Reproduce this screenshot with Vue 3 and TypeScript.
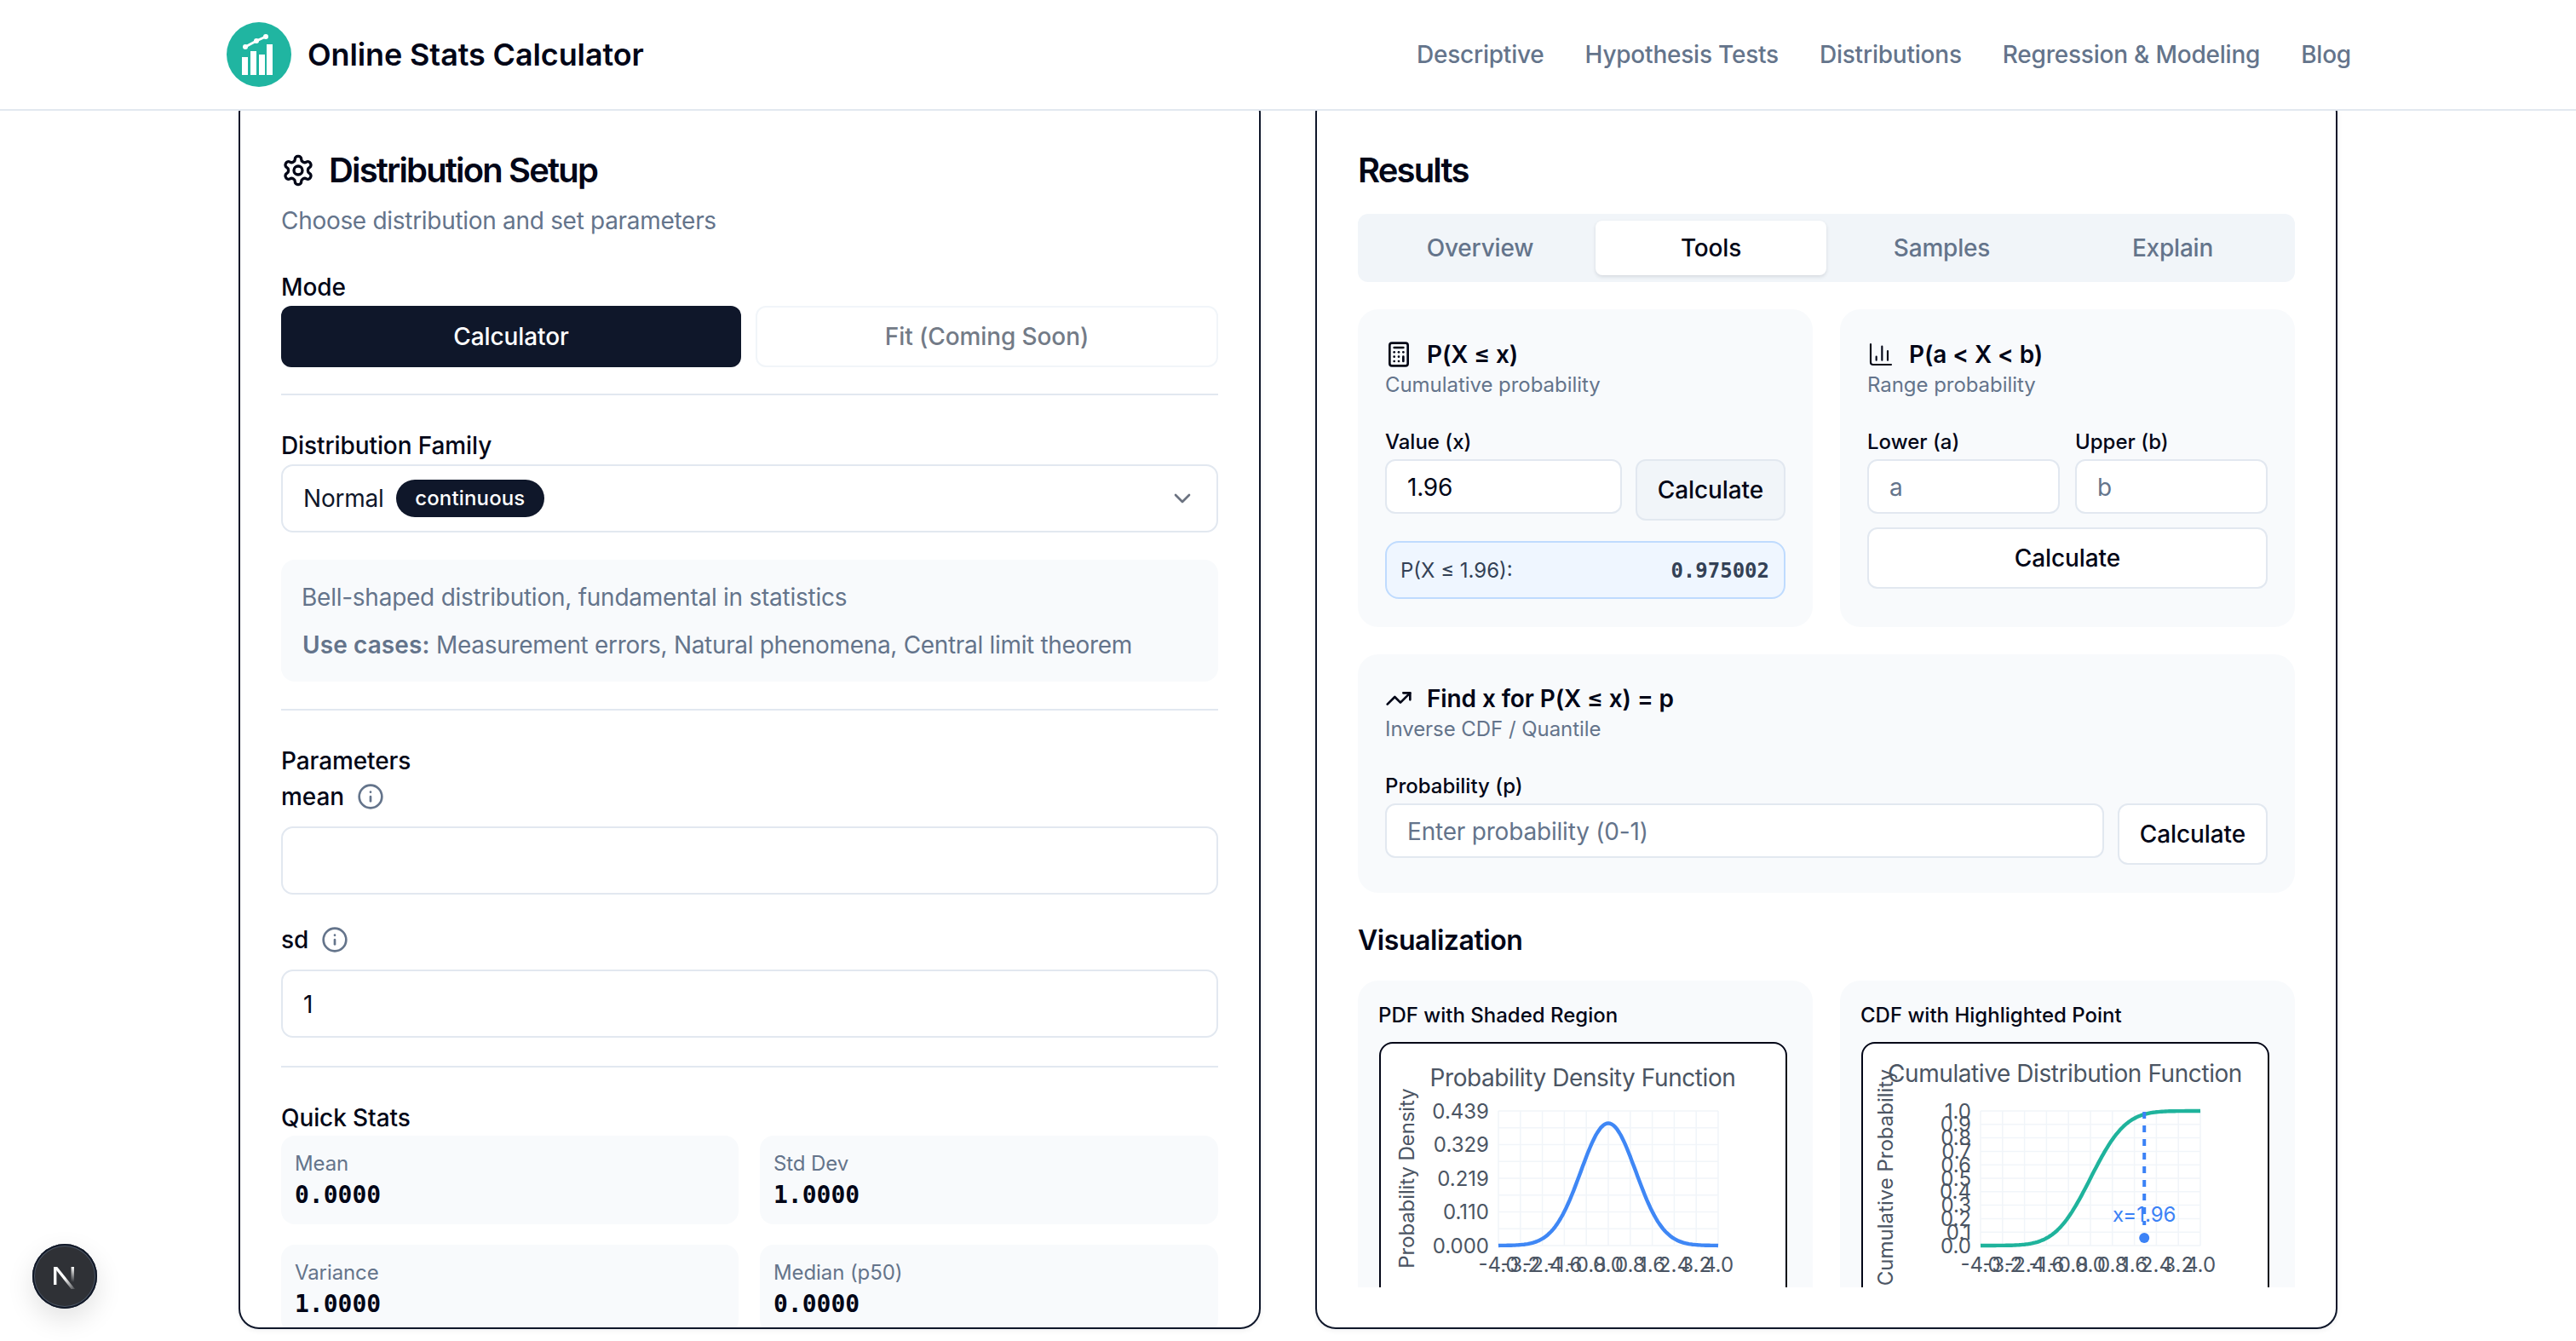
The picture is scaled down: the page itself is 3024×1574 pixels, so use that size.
<script setup lang="ts">
const navItems: string[] = ['Descriptive', 'Hypothesis Tests', 'Distributions', 'Regression & Modeling', 'Blog']
const tabs: string[] = ['Overview', 'Tools', 'Samples', 'Explain']
const stats = [
  { label: 'Mean', value: '0.0000' },
  { label: 'Std Dev', value: '1.0000' },
  { label: 'Variance', value: '1.0000' },
  { label: 'Median (p50)', value: '0.0000' },
]

const L = 138, R = 396, T = 79, B = 237
const xTicks: string[] = ['-4.0', '-3.2', '-2.4', '-1.6', '-0.8', '0.0', '0.8', '1.6', '2.4', '3.2', '4.0']
const xAt = (v: number) => L + ((v + 4) / 8) * (R - L)
const vLines: number[] = xTicks.map((t) => xAt(Number(t)))
const pdfTicks: string[] = ['0.439', '0.329', '0.219', '0.110', '0.000']
const pdfGrid: number[] = Array.from({ length: 9 }, (_, i) => T + (i * (B - T)) / 8)
const cdfTicks: string[] = ['1.0', '0.9', '0.8', '0.7', '0.6', '0.5', '0.4', '0.3', '0.2', '0.1', '0.0']
const cdfGrid: number[] = cdfTicks.map((_, i) => T + (i * (B - T)) / 10)

const pdf = (x: number) => Math.exp(-0.5 * x * x) / Math.sqrt(2 * Math.PI)
const cdf = (x: number) => {
  let s = 0
  const n = 200
  for (let i = 0; i < n; i++) {
    const u = -6 + ((x + 6) * (i + 0.5)) / n
    s += (pdf(u) * (x + 6)) / n
  }
  return s
}
const build = (f: (x: number) => number, top: number): string => {
  const pts: string[] = []
  for (let i = 0; i <= 120; i++) {
    const x = -4 + (i * 8) / 120
    pts.push(`${xAt(x).toFixed(1)},${(B - (f(x) / top) * (B - T)).toFixed(1)}`)
  }
  return 'M' + pts.join('L')
}
const pdfPath = build(pdf, 0.439)
const cdfPath = build(cdf, 1)
const markX = xAt(1.96)
</script>

<template>
  <div class="page">
    <header class="topbar">
      <div class="brand">
        <svg class="logo" viewBox="0 0 76 76" width="76" height="76">
          <circle cx="38" cy="38" r="38" fill="#20b5a1" />
          <rect x="18" y="41" width="7" height="21" fill="#fff" />
          <rect x="28" y="34" width="7" height="28" fill="#fff" />
          <rect x="38" y="38" width="7" height="24" fill="#fff" />
          <rect x="47" y="26" width="7" height="36" fill="#fff" />
          <path d="M22 29 35 22 46 17" fill="none" stroke="#fff" stroke-width="3" />
          <circle cx="22" cy="29" r="3" fill="#fff" />
          <circle cx="35" cy="22" r="3" fill="#fff" />
          <circle cx="46" cy="17" r="3" fill="#fff" />
        </svg>
        <span class="brand-name">Online Stats Calculator</span>
      </div>
      <nav class="nav">
        <span v-for="item in navItems" :key="item">{{ item }}</span>
      </nav>
    </header>

    <main class="columns">
      <section class="card">
        <div class="card-head">
          <svg class="icon" viewBox="0 0 24 24" width="40" height="40">
            <path d="M12.22 2h-.44a2 2 0 0 0-2 2v.18a2 2 0 0 1-1 1.73l-.43.25a2 2 0 0 1-2 0l-.15-.08a2 2 0 0 0-2.73.73l-.22.38a2 2 0 0 0 .73 2.73l.15.1a2 2 0 0 1 1 1.72v.51a2 2 0 0 1-1 1.74l-.15.09a2 2 0 0 0-.73 2.73l.22.38a2 2 0 0 0 2.73.73l.15-.08a2 2 0 0 1 2 0l.43.25a2 2 0 0 1 1 1.73V20a2 2 0 0 0 2 2h.44a2 2 0 0 0 2-2v-.18a2 2 0 0 1 1-1.73l.43-.25a2 2 0 0 1 2 0l.15.08a2 2 0 0 0 2.73-.73l.22-.39a2 2 0 0 0-.73-2.73l-.15-.08a2 2 0 0 1-1-1.74v-.5a2 2 0 0 1 1-1.74l.15-.09a2 2 0 0 0 .73-2.73l-.22-.38a2 2 0 0 0-2.73-.73l-.15.08a2 2 0 0 1-2 0l-.43-.25a2 2 0 0 1-1-1.73V4a2 2 0 0 0-2-2z" />
            <circle cx="12" cy="12" r="3" />
          </svg>
          <h2>Distribution Setup</h2>
        </div>
        <p class="card-sub">Choose distribution and set parameters</p>

        <div class="label mode-label">Mode</div>
        <div class="mode-row">
          <button class="mode active">Calculator</button>
          <button class="mode disabled">Fit (Coming Soon)</button>
        </div>
        <hr class="rule first-rule" />

        <div class="label family-label">Distribution Family</div>
        <div class="select">
          <span class="select-text">Normal</span>
          <span class="badge">continuous</span>
          <svg class="chevron" viewBox="0 0 24 24" width="32" height="32"><path d="m6 9 6 6 6-6" /></svg>
        </div>
        <div class="info-box">
          <p>Bell-shaped distribution, fundamental in statistics</p>
          <p class="cases"><strong>Use cases:</strong> Measurement errors, Natural phenomena, Central limit theorem</p>
        </div>
        <hr class="rule second-rule" />

        <div class="label params-label">Parameters</div>
        <div class="label field-label">
          mean
          <svg class="info" viewBox="0 0 24 24" width="32" height="32"><circle cx="12" cy="12" r="10" /><path d="M12 16v-4" /><path d="M12 8h.01" /></svg>
        </div>
        <input class="field mean-field" type="text" />
        <div class="label field-label sd-label">
          sd
          <svg class="info" viewBox="0 0 24 24" width="32" height="32"><circle cx="12" cy="12" r="10" /><path d="M12 16v-4" /><path d="M12 8h.01" /></svg>
        </div>
        <input class="field sd-field" type="text" value="1" />
        <hr class="rule third-rule" />

        <div class="label stats-label">Quick Stats</div>
        <div class="stats">
          <div v-for="s in stats" :key="s.label" class="stat">
            <div class="stat-label">{{ s.label }}</div>
            <div class="stat-value">{{ s.value }}</div>
          </div>
        </div>
      </section>

      <section class="card results">
        <div class="card-head"><h2>Results</h2></div>
        <div class="scroll">
          <div class="tabs">
            <div v-for="t in tabs" :key="t" class="tab" :class="{ current: t === 'Tools' }">{{ t }}</div>
          </div>

          <div class="tool-grid">
            <div class="tool">
              <div class="tool-title">
                <svg class="icon" viewBox="0 0 24 24" width="32" height="32">
                  <rect x="4" y="2" width="16" height="20" rx="2" /><line x1="8" x2="16" y1="6" y2="6" /><line x1="16" x2="16" y1="14" y2="18" />
                  <path d="M16 10h.01" /><path d="M12 10h.01" /><path d="M8 10h.01" /><path d="M12 14h.01" /><path d="M8 14h.01" /><path d="M12 18h.01" /><path d="M8 18h.01" />
                </svg>
                <span>P(X ≤ x)</span>
              </div>
              <div class="tool-sub">Cumulative probability</div>
              <div class="tool-label">Value (x)</div>
              <div class="tool-row">
                <input class="tool-input grow" type="text" value="1.96" />
                <button class="calc muted">Calculate</button>
              </div>
              <div class="result">
                <span>P(X ≤ 1.96):</span>
                <span class="result-value">0.975002</span>
              </div>
            </div>

            <div class="tool">
              <div class="tool-title">
                <svg class="icon thin" viewBox="0 0 24 24" width="32" height="32">
                  <path d="M3 3v16a2 2 0 0 0 2 2h16" /><path d="M18 17V9" /><path d="M13 17V5" /><path d="M8 17v-3" />
                </svg>
                <span>P(a &lt; X &lt; b)</span>
              </div>
              <div class="tool-sub">Range probability</div>
              <div class="pair">
                <div>
                  <div class="tool-label">Lower (a)</div>
                  <input class="tool-input full" type="text" placeholder="a" />
                </div>
                <div>
                  <div class="tool-label">Upper (b)</div>
                  <input class="tool-input full" type="text" placeholder="b" />
                </div>
              </div>
              <button class="calc wide">Calculate</button>
            </div>
          </div>

          <div class="tool inverse">
            <div class="tool-title">
              <svg class="icon" viewBox="0 0 24 24" width="32" height="32">
                <polyline points="22 7 13.5 15.5 8.5 10.5 2 17" /><polyline points="16 7 22 7 22 13" />
              </svg>
              <span>Find x for P(X ≤ x) = p</span>
            </div>
            <div class="tool-sub">Inverse CDF / Quantile</div>
            <div class="tool-label">Probability (p)</div>
            <div class="tool-row">
              <input class="tool-input grow" type="text" placeholder="Enter probability (0-1)" />
              <button class="calc">Calculate</button>
            </div>
          </div>

          <h3 class="viz-title">Visualization</h3>

          <div class="chart-grid">
            <div class="chart-card">
              <div class="chart-title">PDF with Shaded Region</div>
              <div class="chart-box">
                <svg class="plot" width="474" height="300" viewBox="0 0 474 300">
                  <line v-for="x in vLines" :key="'v' + x" :x1="x" :x2="x" :y1="T" :y2="B" class="grid" />
                  <line v-for="y in pdfGrid" :key="'h' + y" :x1="L" :x2="R" :y1="y" :y2="y" class="grid" />
                  <text x="237" y="40" class="plot-title" text-anchor="middle" dominant-baseline="central">Probability Density Function</text>
                  <text transform="translate(30 158) rotate(-90)" class="tick axis-name" text-anchor="middle" dominant-baseline="central">Probability Density</text>
                  <text v-for="(t, i) in pdfTicks" :key="t" x="127" :y="T + (i * (B - T)) / 4" class="tick" text-anchor="end" dominant-baseline="central">{{ t }}</text>
                  <text v-for="(t, i) in xTicks" :key="t" :x="vLines[i]" y="259" class="tick" text-anchor="middle" dominant-baseline="central">{{ t }}</text>
                  <path :d="pdfPath" class="curve blue" />
                </svg>
              </div>
            </div>

            <div class="chart-card">
              <div class="chart-title">CDF with Highlighted Point</div>
              <div class="chart-box">
                <svg class="plot" width="474" height="300" viewBox="0 0 474 300">
                  <line v-for="x in vLines" :key="'v' + x" :x1="x" :x2="x" :y1="T" :y2="B" class="grid" />
                  <line v-for="y in cdfGrid" :key="'h' + y" :x1="L" :x2="R" :y1="y" :y2="y" class="grid" />
                  <text x="237" y="35" class="plot-title" text-anchor="middle" dominant-baseline="central">Cumulative Distribution Function</text>
                  <text transform="translate(26 157) rotate(-90)" class="tick" text-anchor="middle" dominant-baseline="central">Cumulative Probability</text>
                  <text v-for="(t, i) in cdfTicks" :key="t" x="127" :y="cdfGrid[i]" class="tick" text-anchor="end" dominant-baseline="central">{{ t }}</text>
                  <text v-for="(t, i) in xTicks" :key="t" :x="vLines[i]" y="259" class="tick" text-anchor="middle" dominant-baseline="central">{{ t }}</text>
                  <path :d="cdfPath" class="curve teal" />
                  <line :x1="markX" :x2="markX" y1="80" y2="213" class="mark" />
                  <circle :cx="markX" cy="228" r="6" fill="#3b82f6" />
                  <text :x="markX" y="200" class="mark-label" text-anchor="middle" dominant-baseline="central">x=1.96</text>
                </svg>
              </div>
            </div>
          </div>
        </div>
      </section>
    </main>

    <div class="dev-badge">
      <svg viewBox="0 0 76 76" width="76" height="76">
        <defs>
          <linearGradient id="nfade" gradientUnits="userSpaceOnUse" x1="25" y1="27" x2="50" y2="54">
            <stop offset="0.5" stop-color="#fff" />
            <stop offset="1" stop-color="#fff" stop-opacity="0.1" />
          </linearGradient>
          <linearGradient id="nside" x1="0" y1="0" x2="0" y2="1">
            <stop offset="0" stop-color="#fff" />
            <stop offset="1" stop-color="#fff" stop-opacity="0" />
          </linearGradient>
        </defs>
        <rect x="25" y="27" width="3.4" height="21" fill="#fff" />
        <rect x="45.6" y="27" width="3.4" height="18" fill="url(#nside)" />
        <path d="M25 27h4.2L50 53h-4.4z" fill="url(#nfade)" />
      </svg>
    </div>
  </div>
</template>

<style scoped>
.page {
  position: relative;
  height: 1574px;
  overflow: hidden;
  background: #fff;
  color: #0f172a;
  font-family: Inter, "Noto Sans", sans-serif;
}
.topbar {
  position: relative;
  z-index: 2;
  box-sizing: border-box;
  height: 130px;
  padding: 0 264px 0 266px;
  display: flex;
  align-items: center;
  justify-content: space-between;
  background: #fff;
  border-bottom: 2px solid #e2e8f0;
}
.brand { display: flex; align-items: center; gap: 19px; }
.logo { display: block; }
.brand-name { font-size: 36px; font-weight: 600; color: #020617; letter-spacing: -0.12px; }
.nav { display: flex; gap: 48px; font-size: 28px; font-weight: 500; color: #64748b; letter-spacing: -0.22px; }

.columns {
  display: grid;
  grid-template-columns: 1200px 1200px;
  gap: 64px;
  padding: 0 280px;
  margin-top: -22px;
}
.card {
  box-sizing: border-box;
  height: 1452px;
  padding: 70px 48px 0;
  background: #fff;
  border: 2px solid #0f172a;
  border-radius: 24px;
  box-shadow: 0 2px 6px rgba(15, 23, 42, 0.06);
  overflow: hidden;
}
.results { display: flex; flex-direction: column; padding-bottom: 47px; }
.card-head { display: flex; align-items: center; gap: 16px; height: 40px; flex: none; }
.card-head h2 { margin: 0; font-size: 40px; line-height: 40px; font-weight: 600; letter-spacing: -1.85px; color: #020617; }
.icon { fill: none; stroke: #020617; stroke-width: 2; stroke-linecap: round; stroke-linejoin: round; flex: none; }
.thin { stroke-width: 1.6; }
.card-sub { margin: 19px 0 0; font-size: 28px; line-height: 40px; color: #64748b; letter-spacing: -0.3px; }
.label { font-size: 28px; line-height: 40px; font-weight: 500; color: #020617; letter-spacing: -0.1px; }
.mode-label { margin-top: 38px; }
.mode-row { display: grid; grid-template-columns: 540px 543px; gap: 17px; margin-top: 2px; }
.mode { height: 72px; border-radius: 12px; font: 500 28px Inter, sans-serif; letter-spacing: -0.1px; }
.active { background: #0f172a; color: #fff; border: 0; }
.disabled { background: #fff; color: #737b87; border: 2px solid #f1f5f9; }
.rule { border: 0; height: 2px; background: #e2e8f0; margin: 0; }
.first-rule { margin-top: 31px; }
.family-label { margin-top: 39px; }
.select {
  box-sizing: border-box;
  height: 80px;
  margin-top: 2px;
  padding: 0 24px;
  display: flex;
  align-items: center;
  gap: 14px;
  border: 2px solid #e2e8f0;
  border-radius: 14px;
  font-size: 28px;
}
.select-text { letter-spacing: -0.2px; }
.badge {
  background: #0f172a;
  color: #fff;
  font-size: 24px;
  font-weight: 500;
  line-height: 44px;
  padding: 0 22.5px;
  border-radius: 22px;
  letter-spacing: 0.15px;
}
.chevron { margin-left: auto; fill: none; stroke: #6b7280; stroke-width: 2; stroke-linecap: round; stroke-linejoin: round; }
.info-box {
  box-sizing: border-box;
  height: 143px;
  margin-top: 32px;
  padding: 24px;
  background: #f8fafc;
  border-radius: 16px;
  font-size: 28px;
  line-height: 40px;
  color: #64748b;
  letter-spacing: -0.25px;
}
.info-box p { margin: 0; }
.cases { margin-top: 16px !important; letter-spacing: -0.32px; }
.cases strong { font-weight: 600; letter-spacing: 0.1px; margin-left: 1px; }
.second-rule { margin-top: 32px; }
.params-label { margin-top: 39px; }
.field-label { margin-top: 2px; display: flex; align-items: center; gap: 15px; }
.info { fill: none; stroke: #64748b; stroke-width: 2; stroke-linecap: round; stroke-linejoin: round; }
.field {
  display: block;
  box-sizing: border-box;
  width: 100%;
  height: 80px;
  padding: 2px 24px 0;
  border: 2px solid #e2e8f0;
  border-radius: 14px;
  font: 400 28px Inter, sans-serif;
  color: #020617;
  outline: none;
}
.mean-field { margin-top: 15px; }
.sd-label { margin-top: 33px; }
.sd-field { margin-top: 15px; }
.third-rule { margin-top: 33px; }
.stats-label { margin-top: 39px; }
.stats { display: grid; grid-template-columns: 537px 538px; gap: 24px 25px; margin-top: 1px; }
.stat { box-sizing: border-box; height: 104px; padding: 17px 16px; background: #f8fafc; border-radius: 16px; }
.stat-label { font-size: 24px; line-height: 32px; color: #64748b; letter-spacing: -0.1px; }
.stat-value { margin-top: 3px; font: 700 28px/36px "DejaVu Sans Mono", monospace; color: #020617; }

.scroll { flex: 1; min-height: 0; overflow: hidden; margin-top: 31px; }
.tabs {
  box-sizing: border-box;
  height: 80px;
  padding: 8px;
  display: grid;
  grid-template-columns: repeat(4, 1fr);
  background: #f1f5f9;
  border-radius: 12px;
}
.tab {
  display: flex;
  align-items: center;
  justify-content: center;
  font-size: 28px;
  font-weight: 500;
  color: #64748b;
  border-radius: 8px;
  letter-spacing: -0.2px;
}
.current { background: #fff; color: #020617; box-shadow: 0 2px 4px rgba(15, 23, 42, 0.12); }
.tool-grid { display: grid; grid-template-columns: repeat(2, 534px); gap: 32px; margin-top: 32px; }
.tool { box-sizing: border-box; padding: 33px 32px; background: #f8fafc; border-radius: 24px; }
.tool-title { display: flex; align-items: center; gap: 17px; height: 40px; font-size: 28px; font-weight: 600; color: #020617; letter-spacing: -0.1px; }
.tool-sub { font-size: 24px; line-height: 32px; color: #64748b; letter-spacing: -0.05px; }
.tool-label { font-size: 24px; line-height: 32px; font-weight: 500; color: #020617; }
.tool-sub + .tool-label { margin-top: 35px; }
.tool-row { display: flex; align-items: flex-start; gap: 16px; margin-top: 4px; }
.tool-input {
  box-sizing: border-box;
  height: 64px;
  padding: 2px 24px 0;
  border: 2px solid #e2e8f0;
  border-radius: 12px;
  background: #fff;
  font: 400 28px Inter, sans-serif;
  color: #020617;
  outline: none;
  min-width: 0;
  letter-spacing: -0.2px;
}
.tool-input::placeholder, .field::placeholder { color: #64748b; opacity: 1; }
.grow { flex: 1; }
.full { display: block; width: 100%; margin-top: 4px; }
.calc {
  box-sizing: border-box;
  flex: none;
  width: 176px;
  height: 72px;
  border: 2px solid #e2e8f0;
  border-radius: 12px;
  background: #fff;
  font: 500 28px Inter, sans-serif;
  color: #020617;
  letter-spacing: -0.1px;
}
.muted { background: #f1f5f9; }
.wide { display: block; width: 100%; height: 72px; margin-top: 16px; }
.result {
  box-sizing: border-box;
  height: 68px;
  margin-top: 24px;
  padding: 1px 17px 0 16px;
  display: flex;
  align-items: center;
  justify-content: space-between;
  background: #eff6ff;
  border: 2px solid #bfdbfe;
  border-radius: 16px;
  font-size: 24px;
  color: #334155;
}
.result-value { font: 700 24px "DejaVu Sans Mono", monospace; color: #334155; }
.pair { display: grid; grid-template-columns: 226px 226px; gap: 18px; margin-top: 35px; }
.inverse { margin-top: 32px; padding-top: 32px; }
.viz-title { margin: 36px 0 0; font-size: 32px; line-height: 40px; font-weight: 600; color: #020617; letter-spacing: -0.45px; }
.chart-grid { display: grid; grid-template-columns: repeat(2, 534px); gap: 32px; margin-top: 27px; }
.chart-card { box-sizing: border-box; height: 420px; padding: 25px 30px 0 25px; background: #f8fafc; border-radius: 24px; }
.chart-title { font-size: 24px; line-height: 32px; font-weight: 500; color: #020617; margin-left: -1px; }
.chart-box { margin-top: 15px; height: 340px; background: #fff; border: 2px solid #020617; border-radius: 16px; overflow: hidden; }
.plot { display: block; font-family: Inter, sans-serif; }
.grid { stroke: #f1f5f9; stroke-width: 1.5; }
.plot-title { font-size: 28px; fill: #4b5563; letter-spacing: -0.42px; }
.tick { font-size: 24px; fill: #4b5563; }
.axis-name { letter-spacing: -0.1px; }
.curve { fill: none; stroke-width: 4.4; stroke-linejoin: round; }
.blue { stroke: #3f87f5; }
.teal { stroke: #1fb39c; }
.mark { stroke: #3b82f6; stroke-width: 4; stroke-dasharray: 8 8; }
.mark-label { font-size: 24px; fill: #3b82f6; }

.dev-badge {
  position: absolute;
  left: 38px;
  top: 1460px;
  width: 76px;
  height: 76px;
  border-radius: 50%;
  background: #2f3136;
  box-shadow: inset 0 0 0 2px #111827, inset 0 0 0 3px #4b5563, 0 12px 32px rgba(0, 0, 0, 0.12);
}
.dev-badge svg { display: block; }
</style>

<style>
html, body { margin: 0; background: #fff; }
</style>
